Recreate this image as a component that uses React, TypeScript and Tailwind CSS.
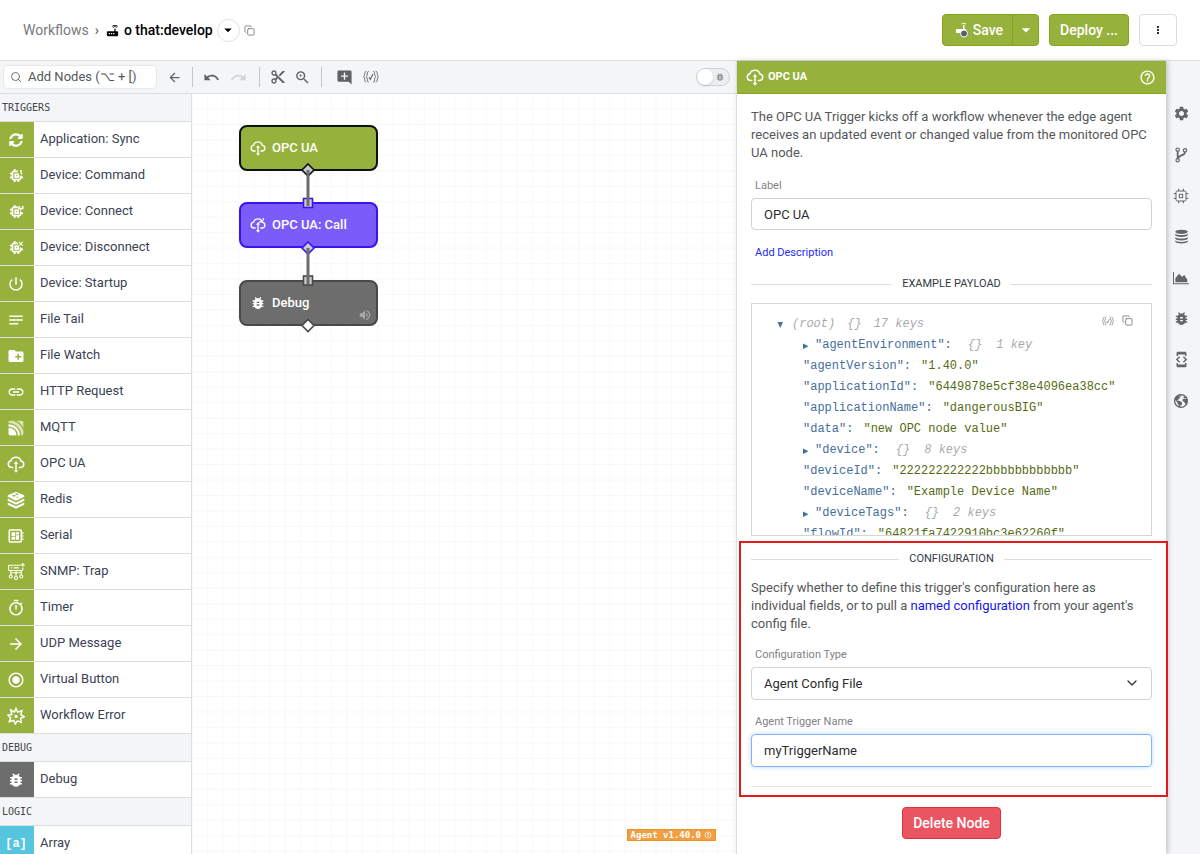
import React from "react";
import { ChevronDown, Copy, Search } from "lucide-react";
import { FaSyncAlt } from "react-icons/fa";
import { IoEarthSharp } from "react-icons/io5";
import {
  MdAddComment,
  MdArrowBack,
  MdArrowDropDown,
  MdArrowForward,
  MdBugReport,
  MdContentCut,
  MdCreateNewFolder,
  MdDeveloperBoard,
  MdDeveloperMode,
  MdHelpOutline,
  MdLink,
  MdMoreVert,
  MdNotes,
  MdPowerSettingsNew,
  MdRadioButtonChecked,
  MdRedo,
  MdRouter,
  MdSettings,
  MdOutlineTimer,
  MdUndo,
  MdVolumeUp,
  MdZoomIn,
} from "react-icons/md";

type IconProps = { className?: string };

const CloudIcon = ({ className, call }: IconProps & { call?: boolean }) => (
  <svg viewBox="0 0 24 24" className={className} fill="none" stroke="currentColor" strokeWidth="2">
    <path d="M8.5 16.5H6A4.400 4.400 0 0 1 5.200 7.800 7 7 0 0 1 18.600 8 4.300 4.300 0 0 1 18.700 16.500H15.500" />
    <path d="M12 10v11" />
    <path d="M12 8l3 3.600H9zM12 23.500l-3-3.600h6z" fill="currentColor" stroke="none" />
    {call && <path d="M13 9.5l5-5M17 8l3-3M19.5 1.5l1 3" strokeWidth="1.6" />}
  </svg>
);

const DeviceIcon = ({ className, variant }: IconProps & { variant: "command" | "connect" | "disconnect" }) => (
  <svg viewBox="0 0 24 24" className={className} fill="none" stroke="currentColor" strokeWidth="2.8">
    <path d="M14 5.500H7.500a2 2 0 0 0-2 2v9a2 2 0 0 0 2 2h9a2 2 0 0 0 2-2V12" />
    <path d="M9 5V1.500M9 22.500v-4M15 22.500v-4M5 9H1.500M5 15H1.500M22.500 15h-4" />
    <rect x="10" y="10" width="4.5" height="4.5" />
    {variant === "command" && <path d="M19 3v4M21 8l-2 2" strokeWidth="2.4" />}
    {variant === "connect" && <path d="M16 3v4h6V3M19 7v3" strokeWidth="2.4" />}
    {variant === "disconnect" && <path d="M16 3l6 6M22 3l-6 6" strokeWidth="1.8" />}
  </svg>
);

const CpuIcon = ({ className }: IconProps) => (
  <svg viewBox="0 0 24 24" className={className} fill="none" stroke="currentColor" strokeWidth="1.5">
    <rect x="4.5" y="4.5" width="15" height="15" rx="2" />
    <rect x="9.5" y="9.5" width="5" height="5" />
    <path d="M8.5 4.5V1M15.5 4.5V1M8.5 23v-3.5M15.5 23v-3.5M4.5 8.5H1M4.5 15.5H1M23 8.5h-3.5M23 15.5h-3.5" />
  </svg>
);

const BranchIcon = ({ className }: IconProps) => (
  <svg viewBox="0 0 24 24" className={className} fill="none" stroke="currentColor" strokeWidth="1.8">
    <circle cx="7" cy="4" r="2.500" />
    <circle cx="7" cy="20" r="2.500" />
    <circle cx="18" cy="5" r="2.500" />
    <path d="M7 6.500v11M18 7.500c0 6-9 4-11 9.500" strokeWidth="2.600" />
  </svg>
);

const MqttIcon = ({ className }: IconProps) => (
  <svg viewBox="0 0 24 24" className={className}>
    <rect x="1" y="1" width="22" height="22" rx="2" fill="#fff" opacity=".65" />
    <path d="M1 12.500C7 12.500 12 17 12.500 23H3a2 2 0 0 1-2-2z" fill="#fff" />
    <path d="M1 10.500A13 13 0 0 1 14 23M1 5.500A18 18 0 0 1 19 23M9 1a21 21 0 0 1 14 13.500" fill="none" stroke="#96b23c" strokeWidth="1.800" />
    <path d="M1 8A15.500 15.500 0 0 1 16.500 23" fill="none" stroke="#fff" strokeWidth="2.500" />
  </svg>
);

const RedisIcon = ({ className }: IconProps) => (
  <svg viewBox="0 0 24 24" className={className} fill="currentColor">
    <path
      fillRule="evenodd"
      d="M12 1l11 4.8v2L12 13 1 7.8v-2zM11 3l1 1.2-1.5.5 2.2.3.8.9.5-1 2-.2-1.6-.7.2-1.1-1.3.5zM7 6.2c0 .6 1 1 2.3 1s2.4-.4 2.4-1-1-1-2.4-1-2.3.4-2.3 1zM12 8l3.5-.6-1.4 1.8z"
    />
    <path d="M1 10l11 5.2L23 10v3L12 18.2 1 13z" />
    <path d="M1 15.2l11 5.2 11-5.2v3L12 23.5 1 18.2z" />
  </svg>
);

const SnmpIcon = ({ className }: IconProps) => (
  <svg viewBox="0 0 24 24" className={className} fill="none" stroke="currentColor" strokeWidth="1.5">
    <path d="M18 3H3a1 1 0 0 0-1 1v5a1 1 0 0 0 1 1h17a1 1 0 0 0 1-1V6M5 6.500h2M9 6.500h7M21 0v5M18.500 2.500h5" />
    <path d="M5 10v6M12 10v8M19 10v6M5 13h14" />
    <circle cx="5" cy="18" r="2" />
    <circle cx="12" cy="20" r="2" />
    <circle cx="19" cy="18" r="2" />
  </svg>
);

const BurstIcon = ({ className }: IconProps) => (
  <svg viewBox="0 0 24 24" className={className} fill="none" stroke="currentColor" strokeWidth="2">
    <path d="M12 2l2.300 4.800L20 5l-1.600 5.200L23 13l-4.800 2 .8 5.500-5-2L11 22.500 9 18l-6 1.500 2-5L1.500 11l5-1.200L5 4l5 2.500z" />
    <circle cx="12" cy="12.500" r="2.200" fill="currentColor" stroke="none" />
  </svg>
);

const DatabaseIcon = ({ className }: IconProps) => (
  <svg viewBox="0 0 24 24" className={className} fill="currentColor">
    <ellipse cx="12" cy="4.500" rx="10" ry="3.500" />
    <path d="M2 7.500c2 3 18 3 20 0v2.500c-2 3.600-18 3.600-20 0zM2 13c2 3 18 3 20 0v2.500c-2 3.600-18 3.600-20 0zM2 18.500c2 3 18 3 20 0V20.500c-2 3.600-18 3.600-20 0z" />
  </svg>
);

const AreaIcon = ({ className }: IconProps) => (
  <svg viewBox="0 0 24 24" className={className} fill="currentColor">
    <path d="M0 3h1.500v17H24v1.500H0z" />
    <path d="M3.500 18.500v-6L9 5.500l4.500 4.500L17 7.500l4.500 7v4z" />
  </svg>
);

const BracesIcon = ({ className }: IconProps) => (
  <svg viewBox="0 0 24 20" className={className} fill="none" stroke="currentColor" strokeWidth="1.300">
    <path d="M5 2H4C2 2 3.500 8 1 10c2.500 2 1 8 3 8h1M9 2H8C6 2 7.500 8 5 10c2.500 2 1 8 3 8h1" />
    <path d="M19 2h1c2 0 .5 6 3 8-2.500 2-1 8-3 8h-1M15 2h1c2 0 .5 6 3 8-2.500 2-1 8-3 8h-1" />
    <path d="M9 11l2 3L15 6" strokeWidth="1.600" />
  </svg>
);

const ArrayIcon = () => (
  <span className="font-['Liberation_Mono',monospace] text-xs font-bold">[a]</span>
);

const triggers = [
  { label: "Application: Sync", icon: <FaSyncAlt className="size-3.5" /> },
  { label: "Device: Command", icon: <DeviceIcon variant="command" className="size-[15px]" /> },
  { label: "Device: Connect", icon: <DeviceIcon variant="connect" className="size-[15px]" /> },
  { label: "Device: Disconnect", icon: <DeviceIcon variant="disconnect" className="size-[15px]" /> },
  { label: "Device: Startup", icon: <MdPowerSettingsNew className="size-[18px]" /> },
  { label: "File Tail", icon: <MdNotes className="size-[18px]" /> },
  { label: "File Watch", icon: <MdCreateNewFolder className="size-[18px]" /> },
  { label: "HTTP Request", icon: <MdLink className="size-[18px]" /> },
  { label: "MQTT", icon: <MqttIcon className="size-4" /> },
  { label: "OPC UA", icon: <CloudIcon className="size-[18px]" /> },
  { label: "Redis", icon: <RedisIcon className="size-[18px]" /> },
  { label: "Serial", icon: <MdDeveloperBoard className="size-[18px]" /> },
  { label: "SNMP: Trap", icon: <SnmpIcon className="size-[18px]" /> },
  { label: "Timer", icon: <MdOutlineTimer className="size-[18px]" /> },
  { label: "UDP Message", icon: <MdArrowForward className="size-[18px]" /> },
  { label: "Virtual Button", icon: <MdRadioButtonChecked className="size-[18px]" /> },
  { label: "Workflow Error", icon: <BurstIcon className="size-[18px]" /> },
];

const groups = [
  { title: "TRIGGERS", color: "bg-[#96b23c]", items: triggers },
  { title: "DEBUG", color: "bg-[#6d6d6d]", items: [{ label: "Debug", icon: <MdBugReport className="size-[18px]" /> }] },
  { title: "LOGIC", color: "bg-[#56c5e0]", items: [{ label: "Array", icon: <ArrayIcon /> }] },
];

const payload = [
  { name: "agentEnvironment", keys: "1 key" },
  { name: "agentVersion", value: "1.40.0" },
  { name: "applicationId", value: "6449878e5cf38e4096ea38cc" },
  { name: "applicationName", value: "dangerousBIG" },
  { name: "data", value: "new OPC node value" },
  { name: "device", keys: "8 keys" },
  { name: "deviceId", value: "222222222222bbbbbbbbbbbb" },
  { name: "deviceName", value: "Example Device Name" },
  { name: "deviceTags", keys: "2 keys" },
  { name: "flowId", value: "64821fa7422910bc3e62260f" },
];

const railItems = [
  { label: "Properties", icon: <MdSettings className="size-[17px]" /> },
  { label: "Versions", icon: <BranchIcon className="size-4" /> },
  { label: "Device", icon: <CpuIcon className="size-4" /> },
  { label: "Storage", icon: <DatabaseIcon className="size-[15px]" /> },
  { label: "Metrics", icon: <AreaIcon className="size-4" /> },
  { label: "Debug log", icon: <MdBugReport className="size-[17px]" /> },
  { label: "Globals", icon: <MdDeveloperMode className="size-[17px]" /> },
  { label: "Resources", icon: <IoEarthSharp className="size-4" /> },
];

const Header = () => (
  <header className="flex h-[61px] shrink-0 items-center justify-between border-b border-[#dcdee0] px-[23px]">
    <nav className="flex items-center text-sm">
      <a href="#workflows" className="text-[#77797c]">Workflows</a>
      <span className="px-1.5 text-[#555]">›</span>
      <MdRouter className="size-[15px]" />
      <span className="ml-1 font-medium text-black">o that:develop</span>
      <button
        aria-label="Switch version"
        className="ml-1 flex size-[23px] items-center justify-center rounded-full border border-[#e2e2e2]"
      >
        <MdArrowDropDown className="size-[18px] shrink-0 text-black" />
      </button>
      <button aria-label="Copy name" className="ml-1 text-[#777]">
        <Copy className="size-[11px]" strokeWidth={1.8} />
      </button>
    </nav>
    <div className="flex items-center gap-[10px] text-sm font-medium text-white">
      <div className="flex h-8 rounded-sm border border-[#84a315] bg-[#96b23c]">
        <button className="flex items-center gap-0.5 pl-3 pr-[9px]">
          <svg viewBox="0 0 16 16" className="size-4">
            <path d="M1 7h7V3h1.500v4H11v4H1z" fill="#fff" />
            <path d="M6.500 2q2-1.500 4.500 0" stroke="#fff" fill="none" />
            <circle cx="9" cy="11.500" r="3.500" fill="#555f70" stroke="#fff" />
          </svg>
          Save
        </button>
        <button aria-label="Save options" className="flex w-[26px] items-center justify-center border-l border-[#84a315]">
          <MdArrowDropDown className="size-5" />
        </button>
      </div>
      <button className="h-8 rounded-sm border border-[#84a315] bg-[#96b23c] px-[10px]">Deploy ...</button>
      <button
        aria-label="More"
        className="flex h-8 w-[38px] items-center justify-center rounded-sm border border-[#dcdcdc] text-black"
      >
        <MdMoreVert className="size-3" />
      </button>
    </div>
  </header>
);

const Divider = () => <span className="h-5 w-px bg-[#c4c6c8]" />;

const Toolbar = () => (
  <div className="flex h-[33px] items-center border-b border-[#dcdee0] bg-[#f3f5f7] pl-[3px] pr-[6px] text-[#5f6163]">
    <label className="flex h-6 w-[154px] items-center gap-1.5 rounded-sm border border-[#e6e8ea] bg-white px-1.5">
      <Search className="size-3 shrink-0" strokeWidth={1.8} />
      <input
        aria-label="Add nodes"
        placeholder="Add Nodes (⌥ + [)"
        className="w-full min-w-0 bg-transparent text-[13px] outline-none placeholder:text-[#555759]"
      />
    </label>
    <button aria-label="Collapse palette" className="mx-[10px]"><MdArrowBack className="size-[15px]" /></button>
    <Divider />
    <div className="ml-[10px] mr-3 flex gap-[10px]">
      <button aria-label="Undo"><MdUndo className="size-[17px]" /></button>
      <button aria-label="Redo" className="text-[#d0d2d4]"><MdRedo className="size-[17px]" /></button>
    </div>
    <Divider />
    <div className="mx-[10px] flex gap-2">
      <button aria-label="Cut"><MdContentCut className="size-4" /></button>
      <button aria-label="Zoom"><MdZoomIn className="size-[17px]" /></button>
    </div>
    <Divider />
    <div className="ml-[14px] flex gap-[10px]">
      <button aria-label="Add note"><MdAddComment className="size-[17px]" /></button>
      <button aria-label="Check templates"><BracesIcon className="w-4" /></button>
    </div>
    <label className="ml-auto flex h-[18px] w-[34px] items-center justify-between rounded-full border border-[#cfd1d3] bg-[#eceeef] pr-1 text-[#999]">
      <input type="checkbox" aria-label="Live debug" className="size-4 appearance-none rounded-full bg-white shadow" />
      <MdBugReport className="size-[10px]" />
    </label>
  </div>
);

const Palette = () => (
  <aside className="w-[192px] shrink-0 overflow-hidden border-r border-[#dcdee0] bg-white">
    {groups.map((group) => (
      <section key={group.title}>
        <h2 className="h-7 border-b border-[#dcdee0] bg-[#f3f5f7] px-0.5 font-['DejaVu_Sans_Mono',monospace] text-[10px] leading-[27px] text-[#444649]">
          {group.title}
        </h2>
        <ul>
          {group.items.map((item) => (
            <li key={item.label} className="flex h-9 border-b border-[#dcdee0]">
              <span className={`flex w-[34px] items-center justify-center pr-0.5 text-white ${group.color}`}>
                {item.icon}
              </span>
              <span className="px-1.5 text-[13px] leading-[34px] text-[#3b4254]">{item.label}</span>
            </li>
          ))}
        </ul>
      </section>
    ))}
  </aside>
);

type NodeProps = { label: string; icon: React.ReactNode; className: string; muted?: boolean };

const FlowNode = ({ label, icon, className, muted }: NodeProps) => (
  <div
    className={`absolute left-[47px] flex h-[46px] w-[139px] items-center gap-1.5 rounded-lg border-2 px-[9px] text-[13px] font-medium text-white ${className}`}
  >
    {icon}
    {label}
    {muted && <MdVolumeUp className="absolute bottom-0.5 right-1 size-3.5 text-[#aaa]" />}
  </div>
);

const Canvas = () => (
  <main className="relative flex-1 overflow-hidden bg-white">
    <svg className="absolute inset-0 size-full">
      <defs>
        <pattern id="grid" x="0.8" width="15.46" height="15.46" patternUnits="userSpaceOnUse">
          <path d="M15.46 0V15.46H0" fill="none" stroke="#f0f1f2" />
        </pattern>
      </defs>
      <rect width="100%" height="100%" fill="url(#grid)" />
    </svg>
    <FlowNode
      label="OPC UA"
      icon={<CloudIcon className="size-4" />}
      className="top-[31px] border-[#0e1018] bg-[#96b23c]"
    />
    <FlowNode
      label="OPC UA: Call"
      icon={<CloudIcon call className="size-4" />}
      className="top-[108px] border-[#3a14ee] bg-[#7b5cf8]"
    />
    <FlowNode
      label="Debug"
      muted
      icon={<MdBugReport className="size-4" />}
      className="top-[186px] border-[#48494c] bg-[#6d6d6d]"
    />
    <svg className="absolute left-0 top-0 h-[250px] w-[240px]" strokeWidth="1.6">
      <path d="M116 70l6 6-6 6-6-6z" fill="#ccc" stroke="#0e1018" />
      <rect x="111.500" y="104.500" width="9" height="9" fill="#ccc" stroke="#3a14ee" />
      <path d="M116 148l6 6-6 6-6-6z" fill="#ccc" stroke="#3a14ee" />
      <rect x="111.500" y="182" width="9" height="9" fill="#ccc" stroke="#48494c" />
      <path d="M116 225.500l6 6-6 6-6-6z" fill="#fff" stroke="#48494c" />
      <path d="M116 76v36M116 154v36" stroke="#6d6d6d" strokeWidth="3" />
    </svg>
    <button className="absolute bottom-[13px] right-[20px] flex h-3 items-center gap-[3px] border border-[#ea9424] bg-[#f0a043] px-[3px] font-['DejaVu_Sans_Mono',monospace] text-[9px] font-bold leading-[10px] text-white">
      Agent v1.40.0
      <MdHelpOutline className="size-2" />
    </button>
  </main>
);

const SectionTitle = ({ children }: { children: React.ReactNode }) => (
  <h3 className="flex items-center gap-[10px] text-[11px] leading-4 text-[#333a45] before:h-px before:flex-1 before:bg-[#dcdee0] after:h-px after:flex-1 after:bg-[#dcdee0]">
    {children}
  </h3>
);

const PayloadTree = () => (
  <div className="relative mt-[11px] h-[233px] overflow-hidden border border-[#d4d6d8] pl-6 pt-[10px] font-['Liberation_Mono',monospace] text-[12px] leading-[21px]">
    <div className="absolute right-[18px] top-[11px] flex gap-2 text-[#777]">
      <button aria-label="Copy as template"><BracesIcon className="w-3" /></button>
      <button aria-label="Copy payload"><Copy className="size-[11px]" strokeWidth={1.8} /></button>
    </div>
    <p className="flex gap-3 italic text-[#aaa]">
      <span className="flex items-center gap-2">
        <svg viewBox="0 0 8 8" className="size-2 text-[#446e9b]" fill="currentColor"><path d="M1.500 1h5.500L4.300 7z" /></svg>
        (root)
      </span>
      <span>{"{}"}</span>
      <span>17 keys</span>
    </p>
    <ul className="pl-[27px]">
      {payload.map((entry) => (
        <li key={entry.name} className="flex items-center text-[#446e9b]">
          {entry.keys && (
            <svg viewBox="0 0 8 8" className="mr-1 size-2" fill="currentColor"><path d="M0 1.500l5.500 2.700L0 7z" /></svg>
          )}
          <span>"{entry.name}":</span>
          {entry.keys ? (
            <span className="ml-4 flex gap-[14px] italic text-[#aaa]">
              <span>{"{}"}</span>
              <span>{entry.keys}</span>
            </span>
          ) : (
            <span className="ml-[10px] text-[#556b12]">"{entry.value}"</span>
          )}
        </li>
      ))}
    </ul>
  </div>
);

const Inspector = () => (
  <section className="relative z-10 flex w-[430px] shrink-0 flex-col border-l border-[#dcdee0] bg-white shadow-[2px_0_5px_rgba(0,0,0,0.2)]">
    <h2 className="flex h-[33px] shrink-0 items-center gap-1 border-b border-[#84a315] bg-[#96b23c] pl-[9px] pr-[10px] font-['Liberation_Sans_Narrow','Roboto',sans-serif] text-[11px] font-bold text-white">
      <CloudIcon className="size-[18px]" />
      OPC UA
      <button aria-label="Help" className="ml-auto"><MdHelpOutline className="size-[17px]" /></button>
    </h2>
    <div className="flex flex-col px-[14px] pt-[14px] text-[13px] leading-[18px] text-[#555759]">
      <p>
        The OPC UA Trigger kicks off a workflow whenever the edge agent receives an updated event or changed value from
        the monitored OPC UA node.
      </p>
      <label htmlFor="label" className="mt-4 px-1 text-[11px] leading-4 text-[#808285]">Label</label>
      <input
        id="label"
        defaultValue="OPC UA"
        className="mt-1 h-8 rounded-sm border border-[#d0d2d4] px-3 text-[#2b2d30] outline-none"
      />
      <a href="#description" className="mt-[15px] self-start px-1 text-[11px] leading-4 text-[#1d2df5]">
        Add Description
      </a>
      <div className="mt-[15px]">
        <SectionTitle>EXAMPLE PAYLOAD</SectionTitle>
      </div>
      <PayloadTree />
      <div className="relative flex flex-col pb-[10px] pt-[15px]">
        <SectionTitle>CONFIGURATION</SectionTitle>
        <p className="mt-3">
          Specify whether to define this trigger's configuration here as individual fields, or to pull a{" "}
          <a href="#named" className="text-[#1414e8]">named configuration</a> from your agent's config file.
        </p>
        <label htmlFor="type" className="mt-[14px] px-1 text-[11px] leading-4 text-[#808285]">
          Configuration Type
        </label>
        <div className="relative mt-1 flex flex-col">
          <select
            id="type"
            className="h-[33px] appearance-none rounded-sm border border-[#d0d2d4] bg-white px-3 text-[#2b2d30] outline-none"
          >
            <option>Agent Config File</option>
          </select>
          <ChevronDown className="pointer-events-none absolute right-3 top-2 size-4 text-[#333]" strokeWidth={2} />
        </div>
        <label htmlFor="trigger" className="mt-[14px] px-1 text-[11px] leading-4 text-[#808285]">
          Agent Trigger Name
        </label>
        <input
          id="trigger"
          defaultValue="myTriggerName"
          className="mt-1 h-[33px] rounded-sm border border-[#85b4ee] px-3 text-[#2b2d30] shadow-[0_0_4px_rgba(80,150,240,0.4)] outline-none"
        />
        <hr className="mt-[19px] border-[#e2e4e6]" />
        <div className="pointer-events-none absolute -left-3 -right-4 bottom-0 top-[5px] border-2 border-[#e3191b]" />
      </div>
      <button className="mt-[10px] h-8 self-center rounded-sm border border-[#e0303f] bg-[#eb5562] px-[10px] text-sm font-medium text-white">
        Delete Node
      </button>
    </div>
  </section>
);

const Rail = () => (
  <nav className="flex w-[34px] shrink-0 flex-col items-center bg-[#f3f5f7] pr-1 pt-8 text-[#636568]">
    {railItems.map((item) => (
      <button key={item.label} aria-label={item.label} className="flex h-[41px] w-full items-center justify-center">
        {item.icon}
      </button>
    ))}
  </nav>
);

const App = () => {
  return (
    <div className="flex h-screen flex-col overflow-hidden bg-white font-['Roboto',sans-serif]">
      <Header />
      <div className="flex min-h-0 flex-1">
        <div className="flex min-w-0 flex-1 flex-col">
          <Toolbar />
          <div className="flex min-h-0 flex-1">
            <Palette />
            <Canvas />
          </div>
        </div>
        <Inspector />
        <Rail />
      </div>
    </div>
  );
};

export default App;
